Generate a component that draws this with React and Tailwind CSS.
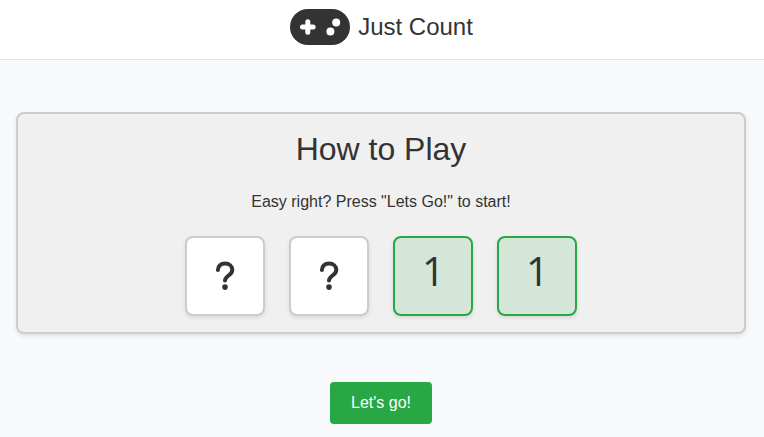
function PadLogo() {
  return (
    <svg className="block h-9 w-[60px]" viewBox="0 0 60 36">
      <rect width="60" height="36" rx="18" fill="#333" />
      <path d="M12.5 18h10.6M17.8 12.8v10.5" stroke="#fff" strokeWidth="5" strokeLinecap="round" />
      <circle cx="46.2" cy="13.6" r="4" fill="#fff" />
      <circle cx="40.4" cy="22.4" r="4" fill="#fff" />
    </svg>
  );
}

function QuestionIcon() {
  return (
    <svg className="block h-10 w-10" viewBox="0 0 40 40" fill="none">
      <path
        d="M12.9 14C12.9 10 15.9 7.6 20 7.6c4.4 0 7.3 2.7 7.3 6.4 0 5.3-7.1 5.6-7.3 10.5"
        stroke="#333"
        strokeWidth="4"
        strokeLinecap="round"
      />
      <circle cx="20" cy="31.1" r="2.8" fill="#333" />
    </svg>
  );
}

const tileBase = "flex h-20 w-20 items-center justify-center rounded-lg border-2 shadow-[0_2px_4px_rgba(0,0,0,0.1)]";

function Tile({ value }) {
  if (!value) {
    return (
      <div className={`${tileBase} border-[#ccc] bg-white`}>
        <QuestionIcon />
      </div>
    );
  }
  return (
    <div className={`${tileBase} border-[#28a745] bg-[#d4e6d8]`}>
      <span className="pb-2.5 pl-px font-['Open_Sans',sans-serif] text-[40px] leading-none">{value}</span>
    </div>
  );
}

export default function App() {
  return (
    <div className="h-[437px] w-[764px] overflow-hidden bg-[#f8f9fb] font-['Liberation_Sans',Arial,sans-serif] text-[#333]">
      <header className="h-[60px] border-b border-[#dee2e6] bg-white pt-[9px]">
        <div className="flex w-[763px] items-start justify-center gap-2">
          <PadLogo />
          <h1 className="text-2xl leading-9">Just Count</h1>
        </div>
      </header>
      <main className="flex w-[762px] flex-col items-center px-4 pt-[52px]">
        <section className="flex h-[222px] w-full flex-col items-center rounded-lg border-2 border-[#ccc] bg-[#f0f0f0] pt-4 shadow-[0_2px_4px_rgba(0,0,0,0.1)]">
          <h2 className="text-[32px] leading-[38px]">How to Play</h2>
          <p className="mt-[22px] text-base leading-6">Easy right? Press "Lets Go!" to start!</p>
          <div className="mt-[22px] flex gap-6">
            <Tile />
            <Tile />
            <Tile value="1" />
            <Tile value="1" />
          </div>
        </section>
        <button className="mt-12 h-[42px] w-[102px] rounded bg-[#28a745] text-base text-white">Let's go!</button>
      </main>
    </div>
  );
}
